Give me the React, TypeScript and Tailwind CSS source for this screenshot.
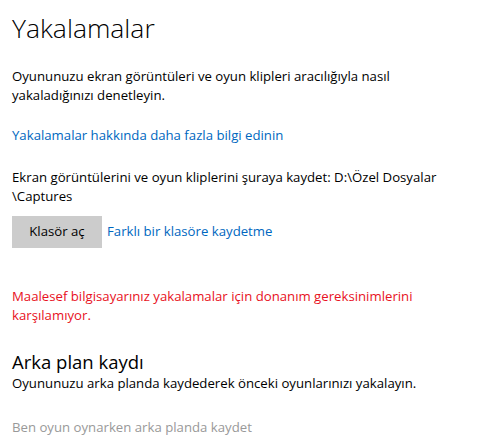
import React from "react";

export default function App() {
  return (
    <div
      className="w-[500px] h-[446px] bg-white text-black overflow-hidden pl-3 pr-4"
      style={{ fontFamily: '"Open Sans", "Noto Sans", sans-serif' }}
    >
      <h1 className="text-[26.5px] font-light leading-[36px] pt-[10px] text-black">Yakalamalar</h1>
      <p className="mt-[21px] text-[13.2px] leading-[19px]">
        Oyununuzu ekran görüntüleri ve oyun klipleri aracılığıyla nasıl
        <br />
        yakaladığınızı denetleyin.
      </p>
      <a className="block mt-[21px] text-[13.2px] leading-[19px] text-[#0067c0]">
        Yakalamalar hakkında daha fazla bilgi edinin
      </a>
      <p className="mt-[23px] text-[13.2px] leading-[19px]">
        Ekran görüntülerini ve oyun kliplerini şuraya kaydet: D:\Özel Dosyalar
        <br />
        \Captures
      </p>
      <div className="mt-[10px] flex items-center gap-[5px]">
        <button className="w-[90px] h-[32px] bg-[#cccccc] text-[13.2px] text-black">Klasör aç</button>
        <a className="text-[13.2px] text-[#0067c0]">Farklı bir klasöre kaydetme</a>
      </div>
      <p className="mt-[39px] text-[13.2px] leading-[19px] text-[#e81123]">
        Maalesef bilgisayarınız yakalamalar için donanım gereksinimlerini
        <br />
        karşılamıyor.
      </p>
      <h2 className="mt-[24px] text-[18.5px] leading-[26px] font-normal">Arka plan kaydı</h2>
      <p className="-mt-[1px] text-[13.2px] leading-[19px]">
        Oyununuzu arka planda kaydederek önceki oyunlarınızı yakalayın.
      </p>
      <p className="mt-[25px] text-[13.2px] leading-[19px] text-[#999999]">
        Ben oyun oynarken arka planda kaydet
      </p>
    </div>
  );
}
